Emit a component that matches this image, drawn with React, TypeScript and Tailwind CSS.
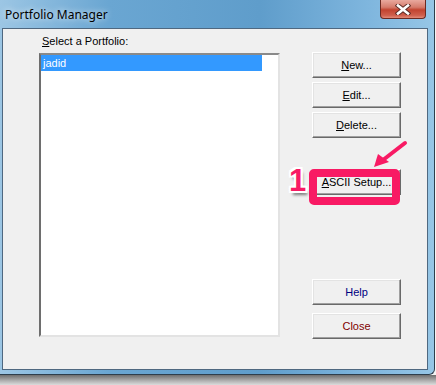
import React from 'react';

const PINK = '#f81a64';

/* ─── Classic raised button ─── */
function WinButton({ children, className = '', tone = 'text-black' }: { children: React.ReactNode; className?: string; tone?: string }) {
  return (
    <div
      className={`w-[89px] h-[26px] shrink-0 flex items-center justify-center bg-[#f0f0f0] border border-t-white border-l-white border-r-[#696969] border-b-[#696969] shadow-[inset_-1px_-1px_0_#a0a0a0,inset_1px_1px_0_#e3e3e3] text-[11px] ${tone} ${className}`}
    >
      {children}
    </div>
  );
}

export default function App() {
  return (
    <div className="relative w-[436px] h-[385px] bg-[#f4f4f4] overflow-hidden font-['Liberation_Sans',Arial,sans-serif]">
      {/* Window frame */}
      <div className="relative w-[435px] h-[375px] flex flex-col border-r border-b border-[#2e3e4c] rounded-br-[6px] bg-[linear-gradient(90deg,#9cc6e4_0%,#6aa6d2_25%,#5f9dcb_60%,#7fb6de_85%,#96c6e6_100%)]">
        {/* Title bar */}
        <div className="h-[28px] shrink-0 flex items-center pl-[5px]">
          <span className="text-[12px] text-black font-['Noto_Sans',sans-serif] leading-none mt-[2px] [text-shadow:0_0_6px_rgba(255,255,255,0.9)]">
            Portfolio Manager
          </span>
        </div>

        {/* Close button */}
        <div className="absolute top-0 left-[380px] w-[46px] h-[19px] rounded-b-[4px] border border-t-0 border-[#6b2a22] bg-[linear-gradient(180deg,#e9a99e_0%,#d57b6c_40%,#c2432f_55%,#cf5f4c_85%,#e38a78_100%)] flex items-center justify-center">
          <svg width="16" height="11" viewBox="0 0 16 11">
            <path d="M3 1.5 L13 9.5 M13 1.5 L3 9.5" stroke="#5a2a24" strokeWidth="4.5" strokeLinecap="square" />
            <path d="M3 1.5 L13 9.5 M13 1.5 L3 9.5" stroke="#ffffff" strokeWidth="2.6" strokeLinecap="square" />
          </svg>
        </div>

        {/* Client area */}
        <div className="ml-[2px] mr-[6px] h-[342px] shrink-0 bg-[#f0f0f0] border border-[#4f6880] flex">
          {/* Left column */}
          <div className="flex flex-col ml-[36px] pt-[6px]">
            <div className="h-[13px] text-[11px] leading-[13px] text-black pl-[3px]">
              <u>S</u>elect a Portfolio:
            </div>
            <div className="mt-[5px] w-[241px] h-[284px] bg-white border-2 border-t-[#8a8a8a] border-l-[#6e6e6e] border-r-[#e3e3e3] border-b-[#e3e3e3]">
              <div className="w-[221px] h-[16px] bg-[#3399ff] text-white text-[11px] leading-[16px] pl-[2px]">jadid</div>
            </div>
          </div>

          {/* Right column */}
          <div className="flex flex-col ml-[32px] pt-[23px]">
            <WinButton><span><u>N</u>ew...</span></WinButton>
            <WinButton className="mt-[4px]"><span><u>E</u>dit...</span></WinButton>
            <WinButton className="mt-[4px]"><span><u>D</u>elete...</span></WinButton>
            <WinButton className="mt-[31px]"><span><u>A</u>SCII Setup...</span></WinButton>
            <WinButton className="mt-[84px]" tone="text-[#000080]">Help</WinButton>
            <WinButton className="mt-[8px]" tone="text-[#800000]">Close</WinButton>
          </div>
        </div>
      </div>

      {/* Drop shadow under the window */}
      <div className="w-[436px] h-[10px] bg-[linear-gradient(180deg,#6e6e6e_0%,#a8a8a8_50%,#dcdcdc_100%)]" />

      {/* Annotation: highlight box */}
      <div
        className="absolute left-[309px] top-[169px] w-[91px] h-[36px] rounded-[5px] border-[8px]"
        style={{ borderColor: PINK }}
      />

      {/* Annotation: arrow */}
      <svg className="absolute left-0 top-0 pointer-events-none" width="436" height="385">
        <path d="M405 143 L383 160" stroke={PINK} strokeWidth="4" strokeLinecap="round" />
        <path d="M374 167 L378 154 L389 162 Z" fill={PINK} />
      </svg>

      {/* Annotation: number */}
      <div
        className="absolute left-[289px] top-[165px] text-[31px] font-bold leading-none font-['Liberation_Sans',sans-serif] [text-shadow:2px_2px_0_#fff,-2px_-2px_0_#fff,2px_-2px_0_#fff,-2px_2px_0_#fff,0_2px_0_#fff,2px_0_0_#fff,-2px_0_0_#fff,0_-2px_0_#fff,2px_4px_3px_rgba(0,0,0,0.5)]"
        style={{ color: PINK }}
      >
        1
      </div>
    </div>
  );
}
